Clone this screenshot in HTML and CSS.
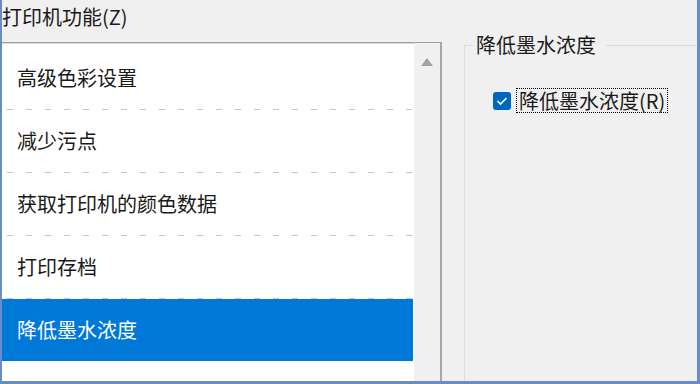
FILE: index.html
```html
<!DOCTYPE html>
<html lang="zh-CN">
<head>
    <meta charset="UTF-8">
    <meta name="viewport" content="width=device-width, initial-scale=1.0">
    <title>打印机功能</title>
    <link rel="stylesheet" href="styles.css">
</head>
<body>
    <div class="frame">
        <div class="left">
            <div class="title">打印机功能(<u>Z</u>)</div>
            <div class="listbox">
                <ul class="items">
                    <li>高级色彩设置</li>
                    <li>减少污点</li>
                    <li>获取打印机的颜色数据</li>
                    <li>打印存档</li>
                    <li class="selected">降低墨水浓度</li>
                </ul>
                <div class="scrollbar">
                    <svg class="arrow" width="12" height="8" viewBox="0 0 12 8"><polygon points="6,0 12,8 0,8" fill="#a3a3a3"/></svg>
                </div>
            </div>
        </div>
        <div class="right">
            <fieldset class="group">
                <legend>降低墨水浓度</legend>
                <label class="check">
                    <span class="box">
                        <svg width="12" height="10" viewBox="0 0 12 10"><polyline points="1.5,5 4.5,8 10.5,2" fill="none" stroke="#fff" stroke-width="1.6"/></svg>
                    </span>
                    <span class="focus">降低墨水浓度(<u>R</u>)</span>
                </label>
            </fieldset>
        </div>
    </div>
</body>
</html>
```

FILE: styles.css
```css
html, body { margin: 0; padding: 0; }
body { width: 700px; height: 384px; overflow: hidden; background: #f0f0f0; font-family: "Noto Sans CJK SC", "Noto Sans", sans-serif; font-size: 20px; color: #1a1a1a; }
.frame { box-sizing: border-box; width: 700px; height: 384px; display: flex; border-left: 2px solid #6a8cc4; border-right: 3px solid #6a8cc4; border-bottom: 3px solid #6a8cc4; overflow: hidden; }
.left { width: 442px; display: flex; flex-direction: column; margin-left: -2px; }
.title { height: 42px; line-height: 34px; margin-left: 2px; white-space: nowrap; }
.title u, .focus u { text-decoration: none; }
.listbox { flex: 1; display: flex; background: #fff; border-top: 1px solid #a0a0a0; border-right: 2px solid #a8a8a8; box-shadow: 0 1px 0 #d8d8d8 inset; }
.items { list-style: none; margin: 0; padding: 4px 0 0; width: 414px; }
.items li { height: 62px; line-height: 62px; padding-left: 17px; padding-bottom: 1px; white-space: nowrap; background: repeating-linear-gradient(to right, transparent 0 7px, #c4c4c4 7px 13px, transparent 13px 19px) left bottom / 100% 1px no-repeat; }
.items li.selected { background: #0078d7; color: #fff; padding-bottom: 0; }
.scrollbar { width: 26px; background: #f0f0f0; margin-left: 1px; display: flex; justify-content: center; padding-top: 15px; }
.arrow { display: block; }
.right { flex: 1; padding-left: 22px; }
.group { margin: 34px 0 0; padding: 0 0 0 28px; height: 400px; border: 1px solid #dcdcdc; border-right: none; }
.group legend { padding: 0 10px 0 3px; margin-left: -20px; line-height: 22px; }
.check { display: flex; align-items: center; margin-top: 32px; }
.box { width: 18px; height: 18px; border-radius: 3px; background: #0067c0; display: flex; align-items: center; justify-content: center; }
.focus { margin-left: 5px; padding: 0 2px; line-height: 23px; border: 1px dotted #000; }
```
